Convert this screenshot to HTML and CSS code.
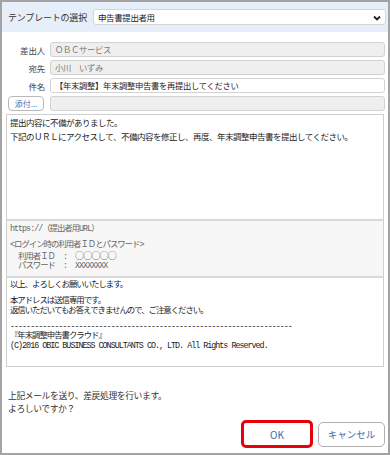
FILE: index.html
```html
<!DOCTYPE html>
<html lang="ja">
<head>
<meta charset="utf-8">
<link rel="stylesheet" href="styles.css">
</head>
<body>
<div class="dialog">
  <div class="header">
    <span class="header-label">テンプレートの選択</span>
    <div class="select">
      <span>申告書提出者用</span>
      <svg class="chev" width="8" height="6" viewBox="0 0 8 6"><polyline points="1,1.5 4,4.5 7,1.5" fill="none" stroke="#222" stroke-width="1.8"/></svg>
    </div>
  </div>
  <div class="form">
    <label class="lbl">差出人</label>
    <div class="field disabled">ＯＢＣサービス</div>
    <label class="lbl">宛先</label>
    <div class="field disabled">小川　いずみ</div>
    <label class="lbl">件名</label>
    <div class="field">【年末調整】年末調整申告書を再提出してください</div>
    <div class="attach-cell"><button class="attach">添付...</button></div>
    <div class="field disabled"></div>
  </div>
  <div class="body">
    <div class="block block1">
      <p class="l1">提出内容に不備がありました。</p>
      <p class="l2">下記のＵＲＬにアクセスして、不備内容を修正し、再度、年末調整申告書を提出してください。</p>
    </div>
    <div class="block block2 mono">
      <p>https://（提出者用URL）</p>
      <p class="gap">&lt;ログイン時の利用者ＩＤとパスワード&gt;</p>
      <p>&nbsp;&nbsp;利用者ＩＤ&nbsp;&nbsp;:&nbsp;&nbsp;<span class="cjk">○○○○○</span></p>
      <p>&nbsp;&nbsp;パスワード&nbsp;&nbsp;:&nbsp;&nbsp;XXXXXXXX</p>
    </div>
    <div class="block block3 mono">
      <p>以上、よろしくお願いいたします。</p>
      <p class="gap">本アドレスは送信専用です。</p>
      <p>返信いただいてもお答えできませんので、ご注意ください。</p>
      <p class="gap">----------------------------------------------------------------------</p>
      <p>『年末調整申告書クラウド』</p>
      <p>(C)2016 OBIC BUSINESS CONSULTANTS CO., LTD. All Rights Reserved.</p>
    </div>
  </div>
  <div class="message">
    <p>上記メールを送り、差戻処理を行います。</p>
    <p>よろしいですか？</p>
  </div>
  <div class="actions">
    <button class="btn ok">OK</button>
    <button class="btn cancel">キャンセル</button>
  </div>
</div>
</body>
</html>
```
FILE: styles.css
```css
* { box-sizing: border-box; }
html, body { margin: 0; padding: 0; background: #fff; }
body {
  width: 390px;
  height: 455px;
  font-family: "Noto Sans CJK JP", "Noto Sans", sans-serif;
  color: #333;
}
p { margin: 0; }
.dialog {
  width: 390px;
  height: 455px;
  border: 2px solid #a3a3a3;
  display: flex;
  flex-direction: column;
}
.header {
  background: #e6eef9;
  height: 30px;
  display: flex;
  align-items: center;
  padding: 0 2px 0 6px;
  flex-shrink: 0;
}
.header-label {
  font-size: 9px;
  letter-spacing: -0.2px;
  color: #333;
  width: 85px;
  flex-shrink: 0;
}
.select {
  flex: 1;
  height: 16px;
  background: #fff;
  border: 1px solid #d6d6d6;
  border-radius: 3px;
  display: flex;
  align-items: center;
  justify-content: space-between;
  padding: 0 4px 0 4px;
  font-size: 8.5px;
  letter-spacing: -0.4px;
  color: #222;
}
.chev { margin-top: 1px; }
.form {
  display: grid;
  grid-template-columns: 43px 1fr;
  column-gap: 5px;
  row-gap: 3px;
  padding: 10px 3px 0 0;
  align-items: center;
}
.lbl {
  text-align: right;
  font-size: 8.5px;
  letter-spacing: -0.2px;
  color: #444;
}
.field {
  height: 15px;
  border: 1px solid #d2d2d2;
  border-radius: 3px;
  background: #fff;
  font-size: 8.3px;
  letter-spacing: -0.3px;
  color: #222;
  line-height: 13px;
  padding: 0 4px;
  white-space: nowrap;
  overflow: hidden;
}
.field.disabled { background: #efefef; color: #777; }
.attach-cell { padding-left: 6px; }
.attach {
  display: block;
  width: 36px;
  height: 15px;
  padding: 0;
  border: 1px solid #b8b8b8;
  border-radius: 4px;
  background: #fff;
  font-family: "Noto Sans CJK JP", sans-serif;
  font-size: 8px;
  color: #3f72b4;
  line-height: 13px;
}
.body {
  margin: 3px 4px 0 4px;
  display: flex;
  flex-direction: column;
}
.block {
  border: 1px solid #cfcfcf;
  background: #fff;
  font-size: 8.5px;
  letter-spacing: -0.5px;
  color: #222;
}
.block1 { height: 107px; padding: 2px 3px; border-bottom: 2px solid #d9d9d9; }
.block1 .l2 { margin-top: 4px; }
.block1 p { line-height: 10px; }
.block2 {
  background: #f7f7f7;
  height: 57px;
  border-top: none;
  border-bottom: 2px solid #d9d9d9;
  padding: 3px 3px;
  color: #666;
}
.block3 {
  height: 89px;
  border-top: none;
  padding: 3px 3px;
  color: #222;
}
.mono {
  font-family: "Liberation Mono", "Noto Sans CJK JP", monospace;
  font-size: 8.4px;
  letter-spacing: -1px;
}
.mono p { line-height: 9.5px; white-space: pre; }
.mono .gap { margin-top: 6.5px; }
.cjk { font-family: "Noto Sans CJK JP", sans-serif; font-size: 9px; letter-spacing: -0.8px; }
.block2 p:first-child { margin-top: 1px; }
.message {
  margin-top: auto;
  padding: 0 6px;
  font-size: 8.8px;
  letter-spacing: -0.4px;
  color: #333;
}
.message p { line-height: 13px; }
.actions {
  display: flex;
  justify-content: flex-end;
  align-items: center;
  gap: 5px;
  padding: 5px 3px 5px 0;
}
.btn {
  font-family: "Noto Sans CJK JP", "Noto Sans", sans-serif;
  background: #fff;
  color: #3a6aa8;
  border-radius: 5px;
  padding: 0;
}
.ok {
  width: 72px;
  height: 28px;
  border: 3px solid #e8000b;
  font-size: 10px;
}
.cancel {
  width: 67px;
  height: 25px;
  border: 1px solid #b0b0b0;
  font-size: 9.5px;
}
```
